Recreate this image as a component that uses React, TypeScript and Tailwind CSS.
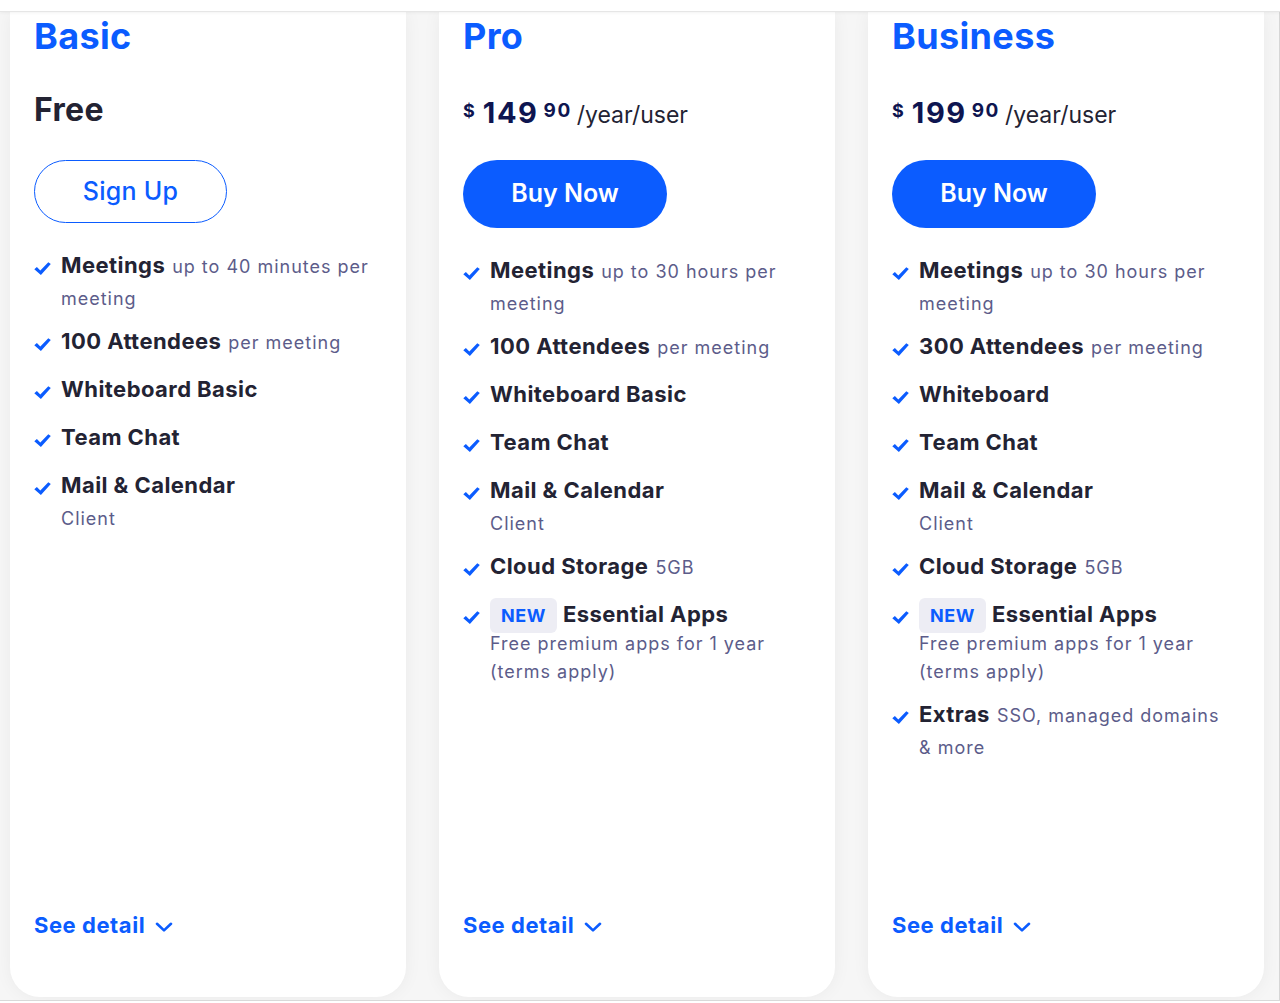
import { Fragment } from 'react';

interface Feature {
  title: string;
  note?: string;
  more?: string[];
  badge?: boolean;
}

interface Plan {
  name: string;
  price?: { whole: string; cents: string };
  cta: string;
  features: Feature[];
}

const MEETINGS_30: Feature = { title: 'Meetings', note: 'up to 30 hours per', more: ['meeting'] };
const MAIL: Feature = { title: 'Mail & Calendar', more: ['Client'] };
const APPS: Feature = {
  title: 'Essential Apps',
  badge: true,
  more: ['Free premium apps for 1 year', '(terms apply)'],
};

const PLANS: Plan[] = [
  {
    name: 'Basic',
    cta: 'Sign Up',
    features: [
      { title: 'Meetings', note: 'up to 40 minutes per', more: ['meeting'] },
      { title: '100 Attendees', note: 'per meeting' },
      { title: 'Whiteboard Basic' },
      { title: 'Team Chat' },
      MAIL,
    ],
  },
  {
    name: 'Pro',
    price: { whole: '149', cents: '90' },
    cta: 'Buy Now',
    features: [
      MEETINGS_30,
      { title: '100 Attendees', note: 'per meeting' },
      { title: 'Whiteboard Basic' },
      { title: 'Team Chat' },
      MAIL,
      { title: 'Cloud Storage', note: '5GB' },
      APPS,
    ],
  },
  {
    name: 'Business',
    price: { whole: '199', cents: '90' },
    cta: 'Buy Now',
    features: [
      MEETINGS_30,
      { title: '300 Attendees', note: 'per meeting' },
      { title: 'Whiteboard' },
      { title: 'Team Chat' },
      MAIL,
      { title: 'Cloud Storage', note: '5GB' },
      APPS,
      { title: 'Extras', note: 'SSO, managed domains', more: ['& more'] },
    ],
  },
];

function CheckIcon() {
  return (
    <svg viewBox="0 0 17 13" className="w-[17px] h-[13px] mt-[14px] shrink-0 text-[#0b5cff]" fill="currentColor">
      <path d="M0.3 7.2 L2.9 4.9 L6.3 8.4 L14.3 0.2 L16.8 1.9 L6.9 13 Z" />
    </svg>
  );
}

function ChevronDown() {
  return (
    <svg viewBox="0 0 18 10" className="w-[18px] h-[10px] mt-[3px]" fill="none" stroke="currentColor" strokeWidth="2.6" strokeLinecap="round" strokeLinejoin="round">
      <path d="M2 1.8 L9 8.4 L16 1.8" />
    </svg>
  );
}

function FeatureItem({ f }: { f: Feature }) {
  return (
    <li className="flex gap-[10px]">
      <CheckIcon />
      <div>
        <div className="h-[34px] leading-[34px] whitespace-nowrap text-[22px] font-bold text-[#232333] tracking-[0.02em]">
          {f.badge && (
            <span className="inline-block h-[35px] leading-[35px] px-[11px] mr-[6px] rounded-[6px] bg-[#ededf4] text-[18px] font-bold text-[#0b5cff] tracking-[0.03em]">
              NEW
            </span>
          )}
          {f.title}
          {f.note && (
            <span className="ml-[7px] text-[18px] leading-none font-normal text-[#5c5c8a] tracking-[0.055em]">{f.note}</span>
          )}
        </div>
        {f.more && (
          <div className={`${f.badge ? '-mt-[1px]' : 'mt-[3px]'} -mb-[3px] text-[18px] leading-[28px] text-[#5c5c8a] tracking-[0.055em]`}>
            {f.more.map((line) => (
              <div key={line}>{line}</div>
            ))}
          </div>
        )}
      </div>
    </li>
  );
}

function PlanCard({ plan }: { plan: Plan }) {
  return (
    <div className="h-full bg-white rounded-b-[30px] shadow-[0_0_18px_rgba(0,0,0,0.05)] pt-[2px] px-[24px] pb-[57px] flex flex-col">
      <h2 className="h-[44px] leading-[44px] text-[36px] font-bold text-[#0b5cff] tracking-[0.01em]">{plan.name}</h2>

      {plan.price ? (
        <div className="mt-[38px] h-[34px] text-[29px] leading-[34px] whitespace-nowrap text-[#0e1550] font-bold">
          <span className="text-[18px] leading-none align-[6px]">$</span>
          <span className="ml-[8px] leading-none tracking-[1.6px]">{plan.price.whole}</span>
          <span className="ml-[5px] text-[19px] leading-none tracking-[1.5px] align-[6px]">{plan.price.cents}</span>
          <span className="ml-[5px] text-[23px] leading-none font-normal text-[#232333]">/year/user</span>
        </div>
      ) : (
        <div className="mt-[38px] h-[34px] leading-[27px] text-[32px] font-bold text-[#232333] tracking-[0.01em]">Free</div>
      )}

      {plan.price ? (
        <button className="mt-[30px] w-[204px] h-[68px] rounded-full bg-[#0b5cff] text-white text-[25px] font-semibold">
          {plan.cta}
        </button>
      ) : (
        <button className="mt-[30px] w-[193px] h-[63px] rounded-full border border-[#0b5cff] text-[#0b5cff] text-[25px] font-medium tracking-[0.01em]">
          {plan.cta}
        </button>
      )}

      <ul className="mt-[25px] flex flex-col gap-[14px]">
        {plan.features.map((f, i) => (
          <Fragment key={i}>
            <FeatureItem f={f} />
          </Fragment>
        ))}
      </ul>

      <a className="mt-auto h-[30px] flex items-center gap-[10px] text-[22px] font-bold text-[#0b5cff] tracking-[0.025em] cursor-pointer">
        See detail
        <ChevronDown />
      </a>
    </div>
  );
}

export default function App() {
  return (
    <div className="w-[1280px] h-[1003px] flex flex-col bg-white overflow-hidden font-[Inter,sans-serif]">
      <div className="relative z-10 h-[12px] shrink-0 bg-white border-b border-[#e6e6e6] shadow-[0_1px_3px_rgba(0,0,0,0.05)]" />
      <main className="flex-1 min-h-0 bg-[#f6f6f6] border-r border-[#d6d6d6] pl-[10px] pb-[3px] grid grid-cols-[396px_396px_396px] gap-x-[33px]">
        {PLANS.map((plan) => (
          <PlanCard key={plan.name} plan={plan} />
        ))}
      </main>
      <div className="h-[3px] shrink-0 bg-white border-t border-[#d9d9d9]" />
    </div>
  );
}
